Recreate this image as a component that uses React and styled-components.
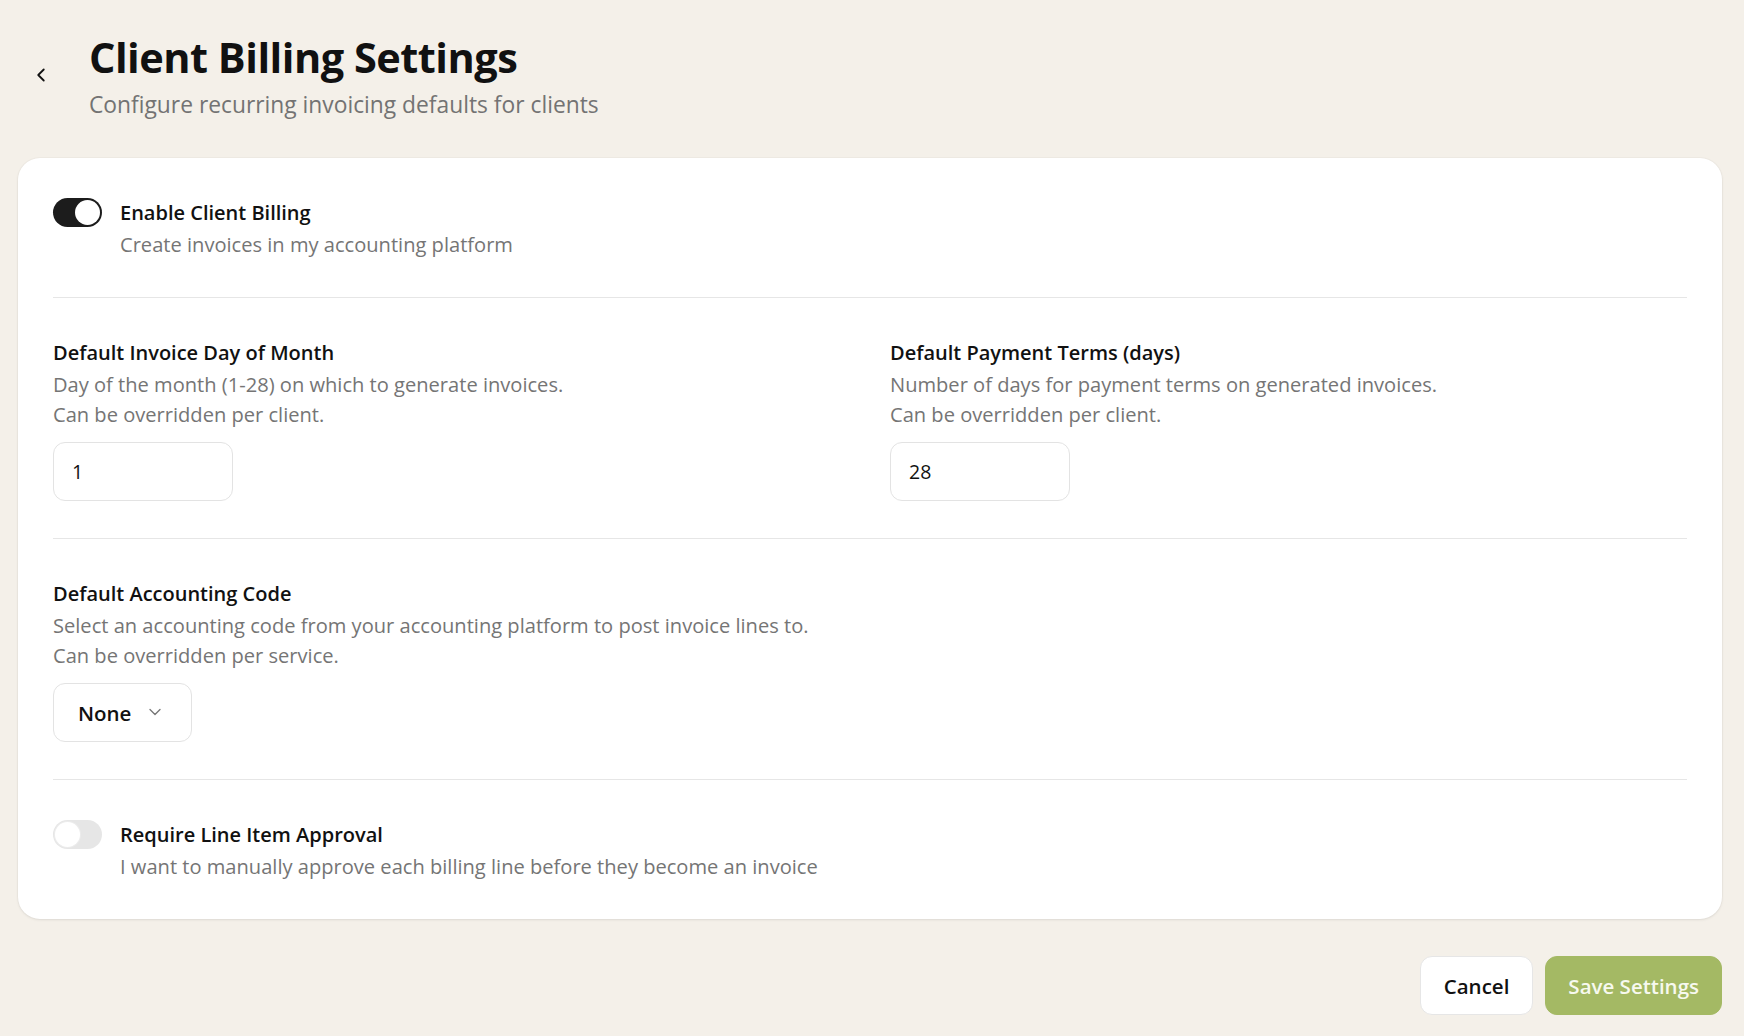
import React, { useState } from 'react'
import styled, { createGlobalStyle } from 'styled-components'
import { ChevronLeft, ChevronDown } from 'lucide-react'

const GlobalStyle = createGlobalStyle`
  html, body {
    margin: 0;
    padding: 0;
    background: #f4f0e9;
  }
  body {
    font-family: 'Open Sans', 'Noto Sans', sans-serif;
    color: #111;
  }
  * {
    box-sizing: border-box;
  }
`

const Page = styled.div`
  min-height: 100vh;
  padding: 30px 22px 24px 18px;
  display: flex;
  flex-direction: column;
`

const Header = styled.header`
  display: flex;
  align-items: center;
  gap: 37px;
  padding-left: 12px;
  margin-bottom: 38px;
`

const BackButton = styled.button`
  border: none;
  background: none;
  padding: 0;
  margin-top: 0;
  display: flex;
  color: #111;
  cursor: pointer;
`

const TitleBlock = styled.div`
  display: flex;
  flex-direction: column;
  gap: 6px;
`

const Title = styled.h1`
  margin: 0;
  font-size: 41.5px;
  line-height: 54px;
  font-weight: 700;
  letter-spacing: -0.5px;
`

const Subtitle = styled.p`
  margin: 0;
  font-size: 22.8px;
  line-height: 30px;
  color: #737373;
`

const Card = styled.section`
  background: #fff;
  border-radius: 22px;
  padding: 0 35px;
  box-shadow: 0 1px 3px rgba(0, 0, 0, 0.08), 0 0 0 1px rgba(0, 0, 0, 0.02);
`

const Section = styled.div`
  padding: 41px 0 37px;
  border-top: ${(p) => (p.$first ? 'none' : '1px solid #e6e6e6')};
`

const Grid = styled.div`
  display: grid;
  grid-template-columns: 1fr 1fr;
  gap: 40px;
`

const ToggleRow = styled.div`
  display: flex;
  align-items: flex-start;
  gap: 18px;
`

const Track = styled.button`
  flex: none;
  width: 49px;
  height: 29px;
  border-radius: 15px;
  border: none;
  padding: 0;
  margin-top: -1px;
  background: ${(p) => (p.$on ? '#1c1c1c' : '#e6e6e6')};
  position: relative;
  cursor: pointer;

  &::after {
    content: '';
    position: absolute;
    top: 2px;
    left: ${(p) => (p.$on ? '22px' : '2px')};
    width: 25px;
    height: 25px;
    border-radius: 50%;
    background: #fff;
    box-shadow: ${(p) => (p.$on ? 'none' : '0 0 0 1px #ececec')};
  }
`

const Label = styled.div`
  font-size: 20px;
  line-height: 28px;
  font-weight: 600;
  color: #111;
  margin-bottom: 3px;
`

const Help = styled.div`
  font-size: 20.1px;
  line-height: 30px;
  color: #757575;
`

const Field = styled.div`
  display: flex;
  flex-direction: column;
  align-items: flex-start;
`

const Input = styled.input`
  margin-top: 12px;
  width: 180px;
  height: 59px;
  border: 1px solid #e3e3e3;
  border-radius: 12px;
  padding: 0 18px;
  font-family: inherit;
  font-size: 19.5px;
  color: #111;
  outline: none;
  background: #fff;
`

const Select = styled.button`
  margin-top: 12px;
  height: 59px;
  display: flex;
  align-items: center;
  gap: 14px;
  padding: 0 26px 0 24px;
  border: 1px solid #e3e3e3;
  border-radius: 12px;
  background: #fff;
  font-family: inherit;
  font-size: 20.5px;
  font-weight: 600;
  color: #111;
  cursor: pointer;

  svg {
    color: #777;
    margin-top: -2px;
  }
`

const Footer = styled.div`
  display: flex;
  justify-content: flex-end;
  gap: 12px;
  margin-top: 37px;
`

const Button = styled.button`
  height: 59px;
  padding: 0 ${(p) => (p.$primary ? '22px' : '23px')};
  border-radius: 12px;
  font-family: inherit;
  font-size: 20.5px;
  font-weight: 600;
  cursor: pointer;
  border: 1px solid ${(p) => (p.$primary ? '#a4b964' : '#e6e6e6')};
  background: ${(p) => (p.$primary ? '#a4b964' : '#fff')};
  color: ${(p) => (p.$primary ? '#f7f9ef' : '#111')};
`

const ToggleSetting = ({ on, onToggle, label, help }) => (
  <ToggleRow>
    <Track $on={on} onClick={onToggle} aria-pressed={on} />
    <div>
      <Label>{label}</Label>
      <Help>{help}</Help>
    </div>
  </ToggleRow>
)

const App = () => {
  const [billing, setBilling] = useState(true)
  const [approval, setApproval] = useState(false)

  return (
    <>
      <GlobalStyle />
      <Page>
        <Header>
          <BackButton aria-label='Back'>
            <ChevronLeft size={22} strokeWidth={2} />
          </BackButton>
          <TitleBlock>
            <Title>Client Billing Settings</Title>
            <Subtitle>Configure recurring invoicing defaults for clients</Subtitle>
          </TitleBlock>
        </Header>

        <Card>
          <Section $first>
            <ToggleSetting
              on={billing}
              onToggle={() => setBilling(!billing)}
              label='Enable Client Billing'
              help='Create invoices in my accounting platform'
            />
          </Section>

          <Section>
            <Grid>
              <Field>
                <Label>Default Invoice Day of Month</Label>
                <Help>Day of the month (1-28) on which to generate invoices.</Help>
                <Help>Can be overridden per client.</Help>
                <Input defaultValue='1' />
              </Field>
              <Field>
                <Label>Default Payment Terms (days)</Label>
                <Help>Number of days for payment terms on generated invoices.</Help>
                <Help>Can be overridden per client.</Help>
                <Input defaultValue='28' />
              </Field>
            </Grid>
          </Section>

          <Section>
            <Field>
              <Label>Default Accounting Code</Label>
              <Help>
                Select an accounting code from your accounting platform to post invoice lines to.
              </Help>
              <Help>Can be overridden per service.</Help>
              <Select>
                None
                <ChevronDown size={20} strokeWidth={1.6} />
              </Select>
            </Field>
          </Section>

          <Section>
            <ToggleSetting
              on={approval}
              onToggle={() => setApproval(!approval)}
              label='Require Line Item Approval'
              help='I want to manually approve each billing line before they become an invoice'
            />
          </Section>
        </Card>

        <Footer>
          <Button>Cancel</Button>
          <Button $primary>Save Settings</Button>
        </Footer>
      </Page>
    </>
  )
}

export default App
